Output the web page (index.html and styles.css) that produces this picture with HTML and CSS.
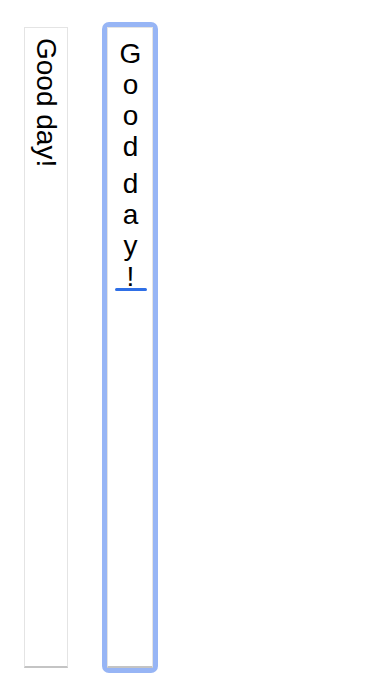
FILE: index.html
```html
<!DOCTYPE html>
<html>
<head>
<meta charset="utf-8">
<link rel="stylesheet" href="styles.css">
</head>
<body>
<div class="wrap">
  <div class="field sideways">Good day!</div>
  <div class="ring">
    <div class="field upright">Good<span class="sp"> </span>day!<span class="caret"></span></div>
  </div>
</div>
</body>
</html>
```
FILE: styles.css
```css
html, body {
  margin: 0;
  padding: 0;
  background: #ffffff;
}
.wrap {
  display: flex;
  align-items: flex-start;
  gap: 34px;
  padding: 22px 0 0 24px;
}
.field {
  box-sizing: border-box;
  height: 641px;
  border: 1px solid #e4e4e4;
  border-bottom: 2px solid #c4c4c4;
  background: #ffffff;
  font-family: "Liberation Sans", Arial, sans-serif;
  font-size: 28px;
  color: #000000;
  writing-mode: vertical-rl;
  white-space: pre;
}
.sideways {
  margin-top: 5px;
  width: 44px;
  padding: 10px 0 0 0;
  line-height: 42px;
  text-orientation: mixed;
}
.ring {
  padding: 5px;
  background: #97b5f5;
  border-radius: 7px;
}
.upright {
  position: relative;
  width: 46px;
  padding: 10px 0 0 0;
  line-height: 44px;
  text-orientation: upright;
}
.sp {
  font-size: 6px;
}
.caret {
  position: absolute;
  left: 7px;
  top: 260px;
  width: 32px;
  height: 3px;
  border-radius: 2px;
  background: #2f6fe6;
}
```
